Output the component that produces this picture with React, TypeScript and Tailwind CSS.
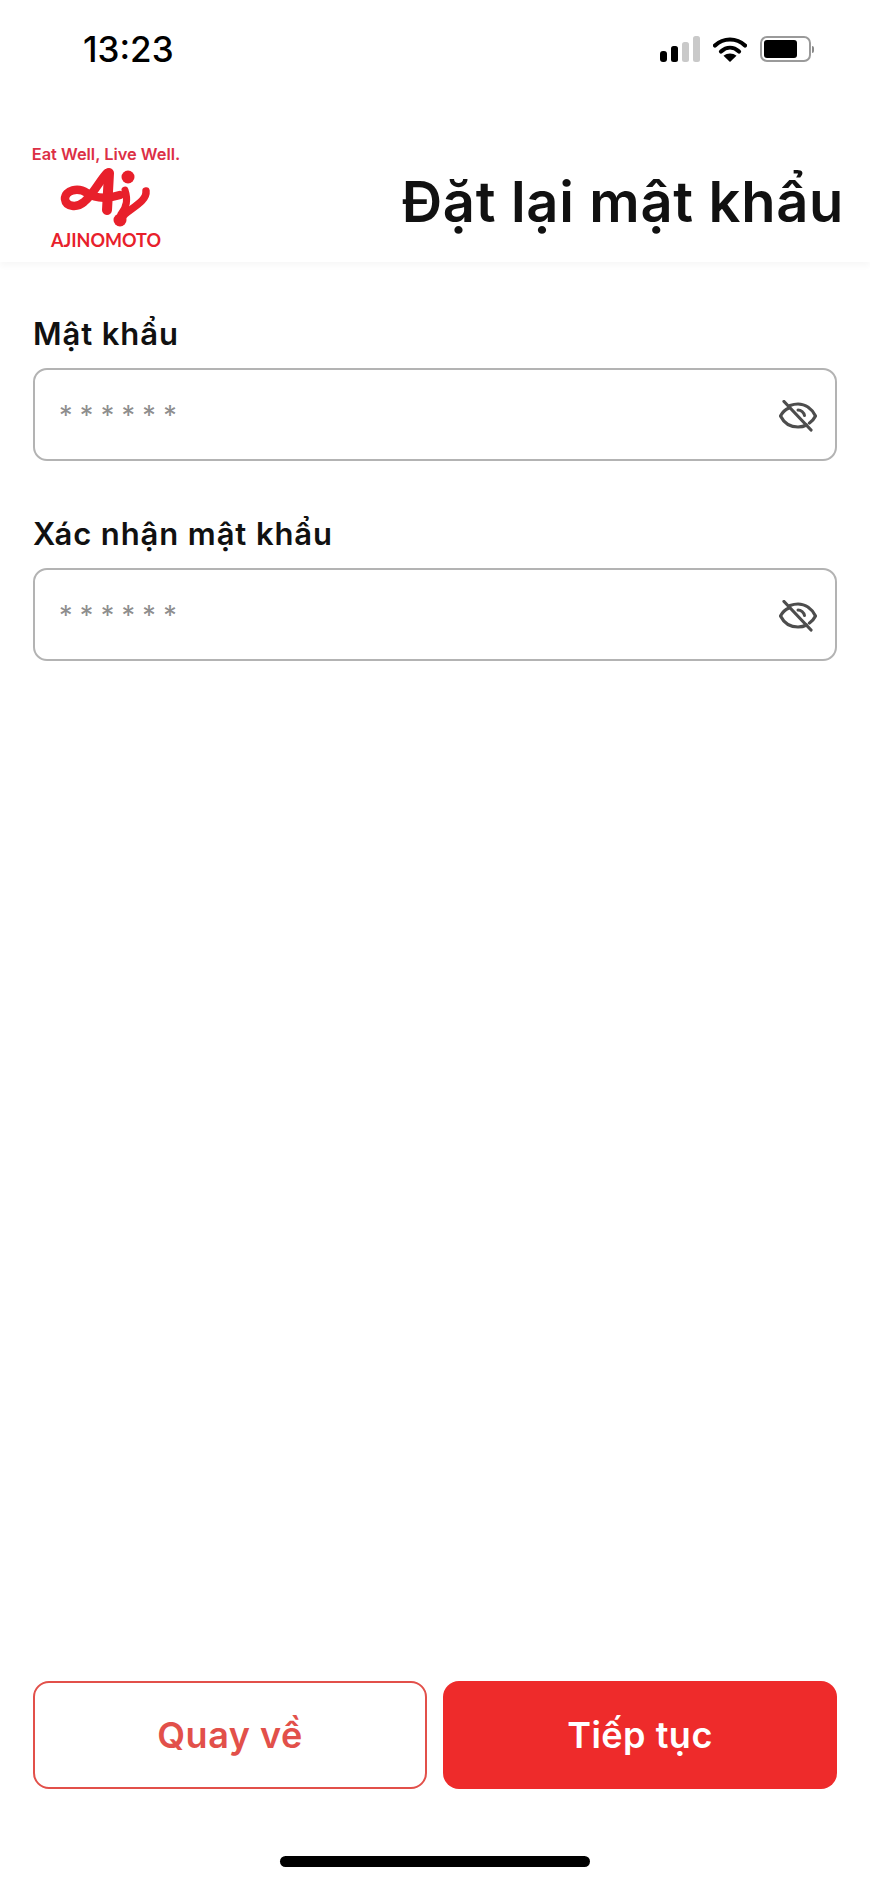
import { useState } from 'react';

const SignalIcon = () => (
  <svg width="40" height="26" viewBox="0 0 40 26" fill="none">
    <rect x="0" y="15" width="7" height="11" rx="3" fill="#000" />
    <rect x="11" y="10" width="7" height="16" rx="2.5" fill="#000" />
    <rect x="22" y="6" width="7" height="20" rx="2.5" fill="#c9c9c9" />
    <rect x="33" y="0" width="7" height="26" rx="2.5" fill="#c9c9c9" />
  </svg>
);

const WifiIcon = () => (
  <svg width="34" height="26" viewBox="0 0 34 26" fill="none">
    <path d="M2 9.5C10.5 1.5 23.5 1.5 32 9.5" stroke="#000" strokeWidth="4.2" strokeLinecap="round" />
    <path d="M8 15.5C13.5 10.5 20.5 10.5 26 15.5" stroke="#000" strokeWidth="4.2" strokeLinecap="round" />
    <path d="M17 26L10.5 19.8C14.5 16.6 19.5 16.6 23.5 19.8Z" fill="#000" />
  </svg>
);

const BatteryIcon = () => (
  <div className="flex items-center gap-[1px]">
    <div className="flex h-[26px] w-[51px] items-center rounded-[7px] border-2 border-[#9a9a9a] p-[2px]">
      <div className="h-full w-[33px] rounded-[3px] bg-black" />
    </div>
    <div className="h-[7px] w-[2px] rounded-r-full bg-[#8a8a8a]" />
  </div>
);

const LogoMark = () => (
  <svg width="94" height="60" viewBox="0 0 92 60" fill="none">
    {/* A: swoosh loop and right stem */}
    <path
      d="M49 5L47 42"
      stroke="#e8202b"
      strokeWidth="10"
      strokeLinecap="round"
    />
    <path
      d="M47 5C40 12 33 27 24 34C17 40 6 39 5 31C5 22 18 19 27 25C36 31 47 31 60 27"
      stroke="#e8202b"
      strokeWidth="8.5"
      strokeLinecap="round"
      strokeLinejoin="round"
    />
    {/* j: dot, stem and tail */}
    <circle cx="68" cy="9" r="6.5" fill="#e8202b" />
    <path d="M65 22C68 31 67 39 61 46" stroke="#e8202b" strokeWidth="7" strokeLinecap="round" />
    <path d="M86 23C87 32 75 38 65 46C61 50 61 52 60 53" stroke="#e8202b" strokeWidth="7.5" strokeLinecap="round" />
    <circle cx="60" cy="52" r="6.5" fill="#e8202b" />
  </svg>
);

const EyeOffIcon = () => (
  <svg width="38" height="32" viewBox="0 0 38 32" fill="none" stroke="#4d4d4d" strokeWidth="3.2" strokeLinecap="round">
    <path d="M10 8C5.5 10 3 13 1.5 16C5 23 11.5 27 19 27C22 27 25 26.4 27.5 25" />
    <path d="M11 5.5C13.5 4.6 16.2 4 19 4C26.5 4 33 9 36.5 16C35 19 33 21.3 30.5 23" />
    <path d="M19 10C22 10 25 12.5 25.5 15.5" strokeWidth="3" />
    <path d="M5 1.5L32 30" />
  </svg>
);

type PasswordFieldProps = {
  label: string;
};

const PasswordField = ({ label }: PasswordFieldProps) => {
  const [value, setValue] = useState('');

  return (
    <div>
      <label className="block text-[31px] leading-[40px] font-semibold tracking-[0.9px] text-[#111]">{label}</label>
      <div className="relative mt-[14px] h-[93px] rounded-[14px] border-2 border-[#b3b3b3] bg-white">
        <input
          type="text"
          value={value}
          onChange={(e) => setValue(e.target.value)}
          placeholder="******"
          className="h-[89px] w-full bg-transparent pt-[2px] pl-[24px] pr-[70px] text-[27px] tracking-[7.3px] outline-none placeholder:text-[#8e8e8e]"
        />
        <button type="button" className="absolute top-[30px] right-[18px]">
          <EyeOffIcon />
        </button>
      </div>
    </div>
  );
};

export default function App() {
  return (
    <div className="flex h-[1883px] w-[870px] flex-col overflow-hidden bg-white font-['Inter',sans-serif]">
      {/* status bar */}
      <div className="flex h-[100px] items-start justify-between pt-[31px] pr-[56px] pl-[83px]">
        <span className="text-[35px] leading-[36px] font-medium text-black">13:23</span>
        <div className="flex items-center pt-[5px]">
          <SignalIcon />
          <div className="mr-[13px] ml-[13px]">
            <WifiIcon />
          </div>
          <BatteryIcon />
        </div>
      </div>

      {/* header with logo and title */}
      <header className="flex h-[162px] items-start justify-between pr-[26px] pl-[32px] shadow-[0_4px_6px_rgba(0,0,0,0.03)]">
        <div className="flex w-[148px] flex-col items-center pt-[46px]">
          <span className="text-[16.4px] leading-[16px] font-semibold whitespace-nowrap text-[#dc2f45]">Eat Well, Live Well.</span>
          <div className="mt-[6px]">
            <LogoMark />
          </div>
          <span className="mt-[3px] font-['Lato',sans-serif] text-[18px] leading-[18px] font-bold text-[#e8202b]">AJINOMOTO</span>
        </div>
        <h1 className="mt-[72px] text-[56px] leading-[60px] font-semibold tracking-[0.7px] whitespace-nowrap text-[#111]">Đặt lại mật khẩu</h1>
      </header>

      {/* form */}
      <main className="flex flex-1 flex-col gap-[53px] px-[33px] pt-[52px]">
        <PasswordField label="Mật khẩu" />
        <PasswordField label="Xác nhận mật khẩu" />
      </main>

      {/* actions */}
      <div className="grid grid-cols-2 gap-[16px] px-[33px]">
        <button type="button" className="h-[108px] rounded-[16px] border-2 border-[#e2504a] bg-white text-[36px] font-semibold tracking-[0.5px] text-[#e2504a]">
          Quay về
        </button>
        <button type="button" className="h-[108px] rounded-[16px] bg-[#ee2b2b] text-[36px] font-semibold tracking-[0.5px] text-white">
          Tiếp tục
        </button>
      </div>

      {/* home indicator */}
      <div className="flex h-[94px] items-start justify-center pt-[67px]">
        <div className="h-[11px] w-[310px] rounded-full bg-black" />
      </div>
    </div>
  );
}
